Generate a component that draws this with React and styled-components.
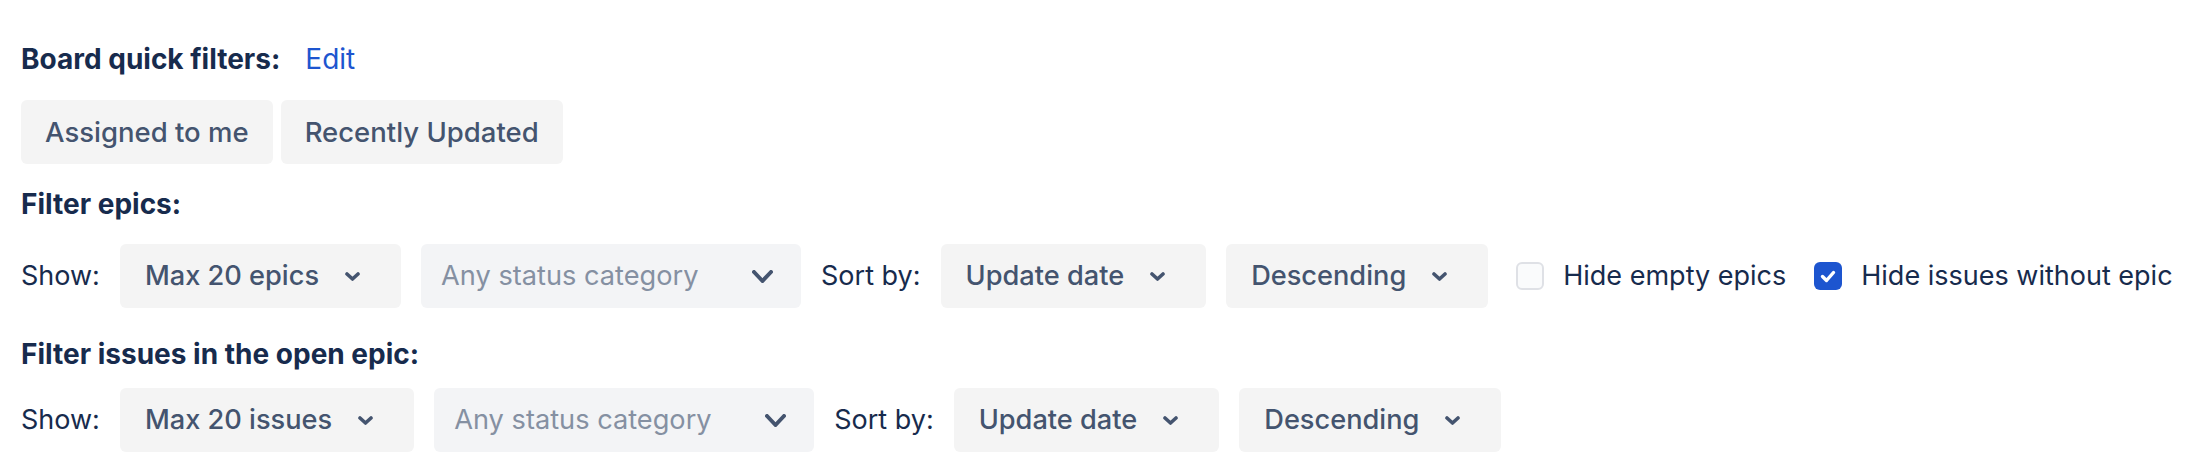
import React from "react";
import styled, { createGlobalStyle } from "styled-components";

const GlobalStyle = createGlobalStyle`
	body {
		margin: 0;
		background: #ffffff;
		font-family: Inter, "Noto Sans", sans-serif;
	}
`;

function Chevron({ large }) {
	const w = large ? 21 : 15;
	const h = large ? 13 : 9;
	return (
		<ChevronSvg width={w} height={h} viewBox={`0 0 ${w} ${h}`}>
			<polyline
				points={`2,2 ${w / 2},${h - 2} ${w - 2},2`}
				fill="none"
				stroke="#44546F"
				strokeWidth={large ? 4 : 3.6}
				strokeLinecap="round"
				strokeLinejoin="round"
			/>
		</ChevronSvg>
	);
}

function Select({ value, placeholder }) {
	return (
		<SelectBox $wide={!!placeholder}>
			<SelectText $placeholder={!!placeholder}>{placeholder || value}</SelectText>
			<Chevron large={!!placeholder} />
		</SelectBox>
	);
}

function Checkbox({ checked, label }) {
	return (
		<CheckLabel>
			<Box $checked={checked}>
				{checked && (
					<svg width="16" height="13" viewBox="0 0 16 13">
						<polyline
							points="2.5,6.5 6.5,10.5 13.5,2.5"
							fill="none"
							stroke="#ffffff"
							strokeWidth="3.4"
							strokeLinecap="round"
							strokeLinejoin="round"
						/>
					</svg>
				)}
			</Box>
			<span>{label}</span>
		</CheckLabel>
	);
}

function FilterRow({ unit, showCheckboxes }) {
	return (
		<ControlRow>
			<Label>Show:</Label>
			<Select value={`Max 20 ${unit}`} />
			<Select placeholder="Any status category" />
			<Label>Sort by:</Label>
			<Select value="Update date" />
			<Select value="Descending" />
			{showCheckboxes && (
				<>
					<Checkbox label="Hide empty epics" />
					<Checkbox checked label="Hide issues without epic" />
				</>
			)}
		</ControlRow>
	);
}

export default function App() {
	return (
		<Page>
			<GlobalStyle />
			<HeadingRow>
				<Heading>Board quick filters:</Heading>
				<EditLink href="#">Edit</EditLink>
			</HeadingRow>
			<ButtonRow>
				<QuickFilter>Assigned to me</QuickFilter>
				<QuickFilter>Recently Updated</QuickFilter>
			</ButtonRow>
			<Heading>Filter epics:</Heading>
			<FilterRow unit="epics" showCheckboxes />
			<Heading $shift={6}>Filter issues in the open epic:</Heading>
			<FilterRow unit="issues" />
		</Page>
	);
}

const Page = styled.div`
	display: flex;
	flex-direction: column;
	align-items: flex-start;
	gap: 20px;
	padding: 39px 0 0 21px;
	font-size: 27px;
	line-height: 40px;
	color: #172b4d;
`;

const HeadingRow = styled.div`
	display: flex;
	align-items: baseline;
	gap: 25px;
	margin-bottom: 1px;
`;

const Heading = styled.div`
	font-weight: 700;
	font-size: 28px;
	line-height: 40px;
	color: #172b4d;
	margin: ${(p) => (p.$shift ? `${p.$shift}px 0 -${p.$shift}px` : "0")};
`;

const EditLink = styled.a`
	color: #1d55cf;
	text-decoration: none;
	font-size: 28px;
`;

const ButtonRow = styled.div`
	display: flex;
	gap: 8px;
`;

const QuickFilter = styled.button`
	height: 64px;
	padding: 0 24px;
	border: 0;
	border-radius: 6px;
	background: #f4f4f4;
	color: #44546f;
	font-family: inherit;
	font-size: 27.5px;
	font-weight: 500;
	cursor: pointer;
`;

const ControlRow = styled.div`
	display: flex;
	align-items: center;
	gap: 20px;
	height: 64px;
`;

const Label = styled.span`
	color: #172b4d;
	white-space: nowrap;
`;

const SelectBox = styled.div`
	display: flex;
	align-items: center;
	justify-content: ${(p) => (p.$wide ? "space-between" : "flex-start")};
	gap: 26px;
	box-sizing: border-box;
	height: 64px;
	width: ${(p) => (p.$wide ? "380px" : "auto")};
	padding: ${(p) => (p.$wide ? "0 28px 0 20px" : "0 41px 0 25px")};
	border-radius: 6px;
	background: ${(p) => (p.$wide ? "#f3f4f6" : "#f4f4f4")};
`;

const SelectText = styled.span`
	color: ${(p) => (p.$placeholder ? "#8590a2" : "#44546f")};
	font-size: 27.2px;
	font-weight: ${(p) => (p.$placeholder ? 400 : 500)};
	white-space: nowrap;
`;

const ChevronSvg = styled.svg`
	display: block;
	flex-shrink: 0;
`;

const CheckLabel = styled.label`
	display: flex;
	align-items: center;
	gap: 19px;
	padding-left: 8px;
	color: #172b4d;
	white-space: nowrap;
`;

const Box = styled.span`
	display: flex;
	align-items: center;
	justify-content: center;
	box-sizing: border-box;
	width: 28px;
	height: 28px;
	border-radius: 6px;
	border: ${(p) => (p.$checked ? "none" : "2px solid #dfe1e6")};
	background: ${(p) => (p.$checked ? "#1d55cf" : "#fafbfc")};
`;
